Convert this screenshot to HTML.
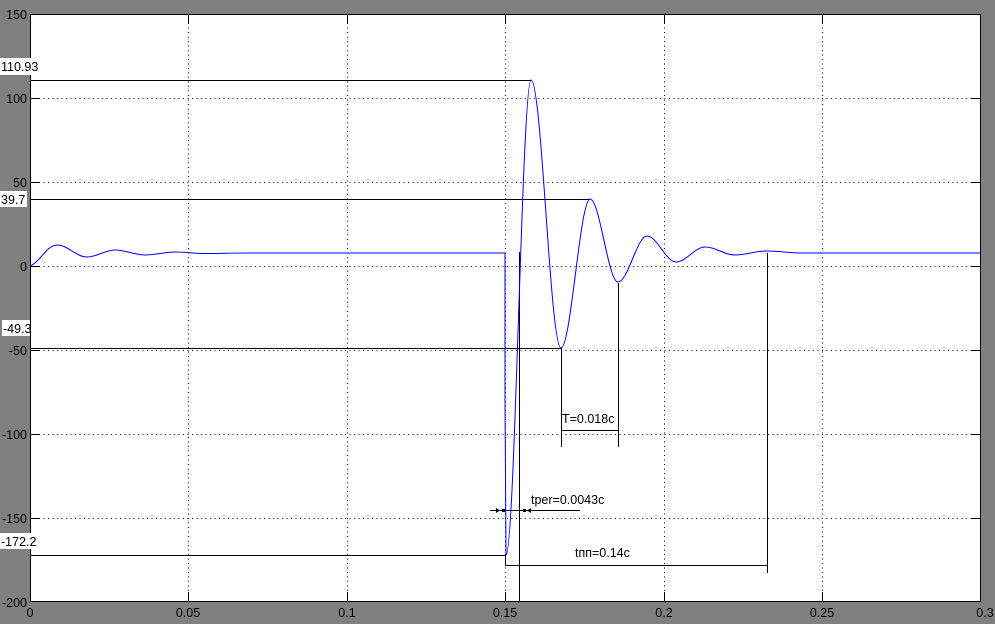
<!DOCTYPE html>
<html><head><meta charset="utf-8"><style>
html,body{margin:0;padding:0;background:#808080;}
svg{display:block;font-family:"Liberation Sans",sans-serif;font-size:12.5px;}
</style></head><body>
<svg width="995" height="624" viewBox="0 0 995 624" xmlns="http://www.w3.org/2000/svg">
<rect x="0" y="0" width="995" height="624" fill="#808080"/>
<rect x="30" y="14" width="951" height="588" fill="#fff"/>
<g stroke="#000" stroke-width="1" stroke-dasharray="1,3.5" shape-rendering="crispEdges">
<line x1="188.5" y1="14" x2="188.5" y2="602"/><line x1="347.5" y1="14" x2="347.5" y2="602"/>
<line x1="505.5" y1="14" x2="505.5" y2="602"/><line x1="664.5" y1="14" x2="664.5" y2="602"/>
<line x1="822.5" y1="14" x2="822.5" y2="602"/>
<line x1="30" y1="98.5" x2="981" y2="98.5"/><line x1="30" y1="182.5" x2="981" y2="182.5"/>
<line x1="30" y1="266.5" x2="981" y2="266.5"/><line x1="30" y1="350.5" x2="981" y2="350.5"/>
<line x1="30" y1="434.5" x2="981" y2="434.5"/><line x1="30" y1="518.5" x2="981" y2="518.5"/>
</g>
<g stroke="#000" stroke-width="1" shape-rendering="crispEdges" fill="none">
<path d="M40 98.5H30M40 182.5H30M40 266.5H30M40 350.5H30M40 434.5H30M40 518.5H30M971 98.5H981M971 182.5H981M971 266.5H981M971 350.5H981M971 434.5H981M971 518.5H981"/>
<path d="M188.5 14v10M347.5 14v10M505.5 14v10M664.5 14v10M822.5 14v10M188.5 602v-10M347.5 602v-10M505.5 602v-10M664.5 602v-10M822.5 602v-10"/>
<rect x="30.5" y="14.5" width="950" height="587"/>
<path d="M30 80.5H531M30 199.5H590M30 348.5H561M30 555.5H506"/>
<path d="M561.5 348v99M618.5 283v164M561 430.5H618"/>
<path d="M519.5 252V602"/>
<path d="M505.5 555v10M505 565.5H767M767.5 253v320"/>
<path d="M490 510.5H580"/>
</g>
<g fill="#000"><rect x="502" y="509" width="3" height="3"/><rect x="523" y="509" width="3" height="3"/>
<path d="M496 508 l4 2.5 -4 2.5z M531 508 l-4 2.5 4 2.5z"/></g>
<path fill="none" stroke="#0000ff" stroke-width="1" d="M30 266 C40 262 47 245 57 245 C68 245 76 257 87 257 C97 257 105 250 115 250 C126 250 134 255 145 255 C156 255 164 252 175 252 C186 252 194 253.5 205 253.5 C220 253.5 230 253 245 253 L505 253 L505 400 L506 555 C515 555 522 80 531 80 C542 80 550 348 561 348 C571 348 580 199 590 199 C600 199 608 282 618 282 C628 282 637 236 647 236 C657 236 666 262 676 262 C686 262 695 247 705 247 C716 247 724 255 735 255 C746 255 755 251 766 251 C780 251 790 253 800 253 L981 253"/>
<g fill="#fff">
<rect x="0" y="58" width="38" height="17"/><rect x="0" y="191" width="27" height="16"/>
<rect x="2" y="320" width="28" height="16"/><rect x="0" y="533" width="36" height="16"/>
</g>
<g fill="#000">
<text x="1" y="71">110.93</text><text x="1" y="204">39.7</text>
<text x="3" y="333">-49.3</text><text x="1" y="546">-172.2</text>
<g text-anchor="end">
<text x="27" y="19">150</text><text x="27" y="103">100</text><text x="27" y="187">50</text>
<text x="27" y="271">0</text><text x="27" y="355">-50</text><text x="27" y="439">-100</text>
<text x="27" y="523">-150</text><text x="27" y="607">-200</text>
</g>
<g text-anchor="middle">
<text x="30" y="617">0</text><text x="188" y="617">0.05</text><text x="347" y="617">0.1</text>
<text x="505" y="617">0.15</text><text x="664" y="617">0.2</text><text x="822" y="617">0.25</text>
<text x="985" y="617">0.3</text>
</g>
<text x="562" y="423">T=0.018c</text>
<text x="531" y="504">tper=0.0043c</text>
<text x="575" y="557">tпп=0.14c</text>
</g>
</svg>
</body></html>
